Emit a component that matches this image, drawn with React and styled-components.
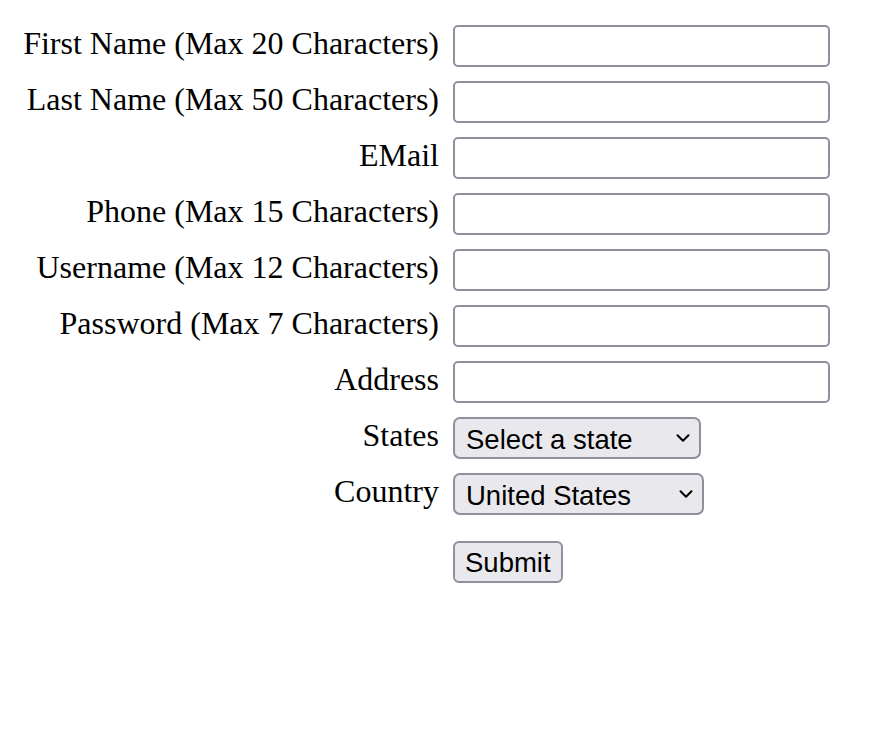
import { useState } from 'react';
import styled, { createGlobalStyle } from 'styled-components';
import { ChevronDown } from 'lucide-react';

const GlobalStyle = createGlobalStyle`
  html, body {
    margin: 0;
    padding: 0;
    background: #ffffff;
  }
  body {
    font-family: 'Liberation Serif', 'Times New Roman', serif;
    color: #000000;
  }
`;

const Form = styled.form`
  display: grid;
  grid-template-columns: 415px 377px;
  column-gap: 14px;
  row-gap: 14px;
  align-items: center;
  padding: 25px 0 0 24px;
`;

const Label = styled.label`
  justify-self: end;
  margin-bottom: 6px;
  font-size: 32px;
  line-height: 36px;
  white-space: nowrap;
`;

const TextInput = styled.input`
  box-sizing: border-box;
  width: 377px;
  height: 42px;
  margin: 0;
  padding: 0 8px;
  border: 2px solid #8f8f9d;
  border-radius: 5px;
  background: #ffffff;
  font-family: 'Liberation Sans', Arial, sans-serif;
  font-size: 27.5px;
  outline: none;
`;

const SelectWrap = styled.div`
  position: relative;
  width: ${(props) => props.$width}px;
  height: 42px;
`;

const Select = styled.select`
  appearance: none;
  box-sizing: border-box;
  width: 100%;
  height: 42px;
  margin: 0;
  padding: 2px 40px 0 11px;
  border: 2px solid #8f8f9d;
  border-radius: 7px;
  background: #e9e9ed;
  color: #000000;
  font-family: 'Liberation Sans', Arial, sans-serif;
  font-size: 27.5px;
  outline: none;
`;

const Chevron = styled(ChevronDown)`
  position: absolute;
  right: 7px;
  top: 10px;
  pointer-events: none;
`;

const Spacer = styled.div``;

const SubmitButton = styled.button`
  justify-self: start;
  box-sizing: border-box;
  height: 42px;
  margin-top: 12px;
  padding: 2px 10px 0;
  border: 2px solid #8f8f9d;
  border-radius: 6px;
  background: #e9e9ed;
  color: #000000;
  font-family: 'Liberation Sans', Arial, sans-serif;
  font-size: 27.5px;
  cursor: pointer;
`;

const fields = [
  { id: 'firstName', label: 'First Name (Max 20 Characters)', max: 20 },
  { id: 'lastName', label: 'Last Name (Max 50 Characters)', max: 50 },
  { id: 'email', label: 'EMail', max: 100 },
  { id: 'phone', label: 'Phone (Max 15 Characters)', max: 15 },
  { id: 'username', label: 'Username (Max 12 Characters)', max: 12 },
  { id: 'password', label: 'Password (Max 7 Characters)', max: 7, type: 'password' },
  { id: 'address', label: 'Address', max: 200 },
];

const states = ['Select a state', 'Alabama', 'Alaska', 'Arizona', 'California', 'New York', 'Texas'];
const countries = ['United States', 'Canada', 'Mexico'];

function App() {
  const [values, setValues] = useState({});
  const [state, setState] = useState(states[0]);
  const [country, setCountry] = useState(countries[0]);

  const handleChange = (e) => {
    setValues({ ...values, [e.target.id]: e.target.value });
  };

  return (
    <>
      <GlobalStyle />
      <Form onSubmit={(e) => e.preventDefault()}>
        {fields.map((field) => [
          <Label key={field.id + '-label'} htmlFor={field.id}>
            {field.label}
          </Label>,
          <TextInput
            key={field.id}
            id={field.id}
            type={field.type || 'text'}
            maxLength={field.max}
            value={values[field.id] || ''}
            onChange={handleChange}
          />,
        ])}
        <Label htmlFor='states'>States</Label>
        <SelectWrap $width={248}>
          <Select id='states' value={state} onChange={(e) => setState(e.target.value)}>
            {states.map((s) => (
              <option key={s}>{s}</option>
            ))}
          </Select>
          <Chevron size={22} strokeWidth={2.2} />
        </SelectWrap>
        <Label htmlFor='country'>Country</Label>
        <SelectWrap $width={251}>
          <Select id='country' value={country} onChange={(e) => setCountry(e.target.value)}>
            {countries.map((c) => (
              <option key={c}>{c}</option>
            ))}
          </Select>
          <Chevron size={22} strokeWidth={2.2} />
        </SelectWrap>
        <Spacer />
        <SubmitButton type='submit'>Submit</SubmitButton>
      </Form>
    </>
  );
}

export default App;
